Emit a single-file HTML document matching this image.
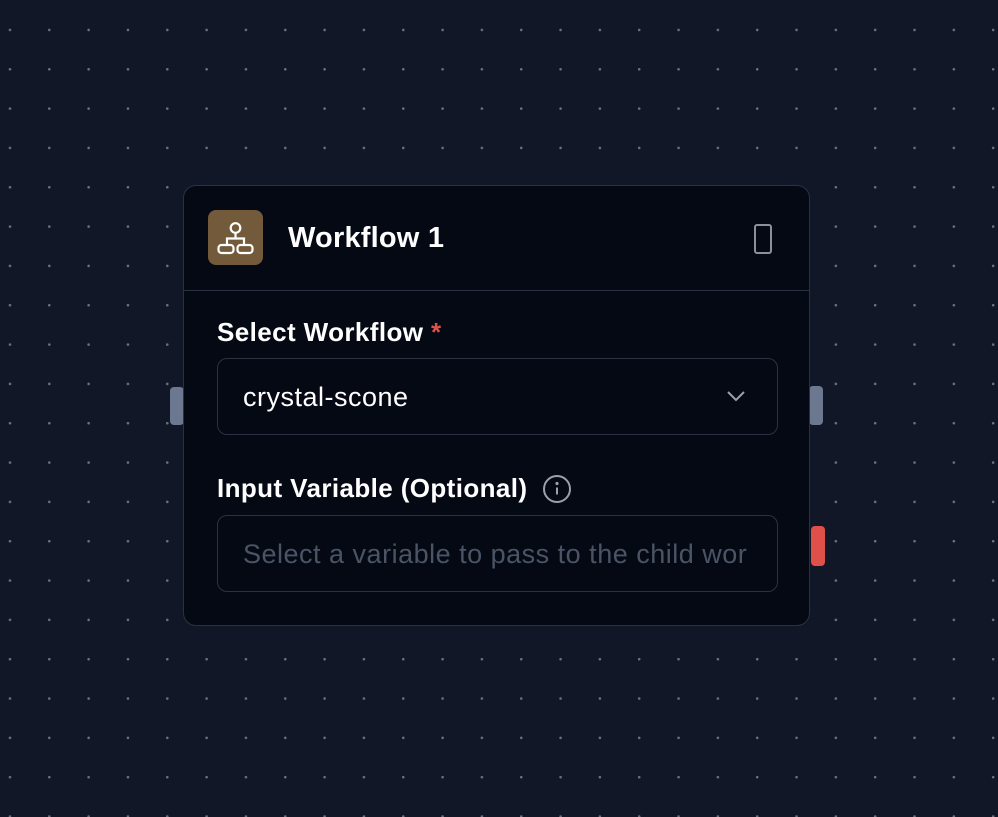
<!DOCTYPE html>
<html><head><style>
html,body{margin:0;padding:0}
body{width:998px;height:817px;overflow:hidden;background-color:#111726;
background-image:radial-gradient(circle,#6a7282 1.1px,transparent 1.5px);
background-size:39.33px 39.33px;background-position:-9.7px 10.3px;
font-family:"Liberation Sans",sans-serif;position:relative}
.card{position:absolute;left:183px;top:185px;width:625px;height:439px;background:#040914;border:1px solid #2a3242;border-radius:13px}
.hdr{position:absolute;left:0;top:0;right:0;height:104px;border-bottom:1px solid #2a3242}
.ic{position:absolute;left:24px;top:24px;width:55px;height:55px;background:#735a3a;border-radius:8px}
.title{position:absolute;left:104px;top:36px;font-size:29px;color:#fff;font-weight:bold;letter-spacing:0.2px}
.lbl{position:absolute;left:33px;font-size:26px;font-weight:bold;color:#fff;letter-spacing:0.4px}
.box{position:absolute;left:33px;width:559px;height:75px;border:1px solid #2a3242;border-radius:10px}
.bt{position:absolute;left:25px;top:23px;font-size:27px;letter-spacing:0.5px}
.h{position:absolute;border-radius:4px}
</style></head><body>
<div class="h" style="left:170px;top:387px;width:14px;height:38px;background:#6b7890"></div>
<div class="h" style="left:809px;top:386px;width:14px;height:39px;background:#6b7890"></div>
<div class="h" style="left:811px;top:526px;width:14px;height:40px;background:#e0504a"></div>
<div class="card">
 <div class="hdr">
  <div class="ic"><svg width="55" height="55" viewBox="0 0 55 55" fill="none" stroke="#fff" stroke-width="2.2"><circle cx="27.5" cy="18" r="4.8"/><path d="M27.5 22.8V28.5M19 35v-6.5h17V35"/><rect x="10.5" y="35" width="15" height="8" rx="3"/><rect x="29.5" y="35" width="15" height="8" rx="3"/></svg></div>
  <div class="title">Workflow 1</div>
  <div style="position:absolute;left:570px;top:38px;width:14px;height:26px;border:2px solid #8a919c;border-radius:3px"></div>
 </div>
 <div class="lbl" style="top:131px">Select Workflow <span style="color:#e0504a">*</span></div>
 <div class="box" style="top:172px"><div class="bt" style="color:#fff">crystal-scone</div>
  <svg style="position:absolute;left:507px;top:30px" width="22" height="14" viewBox="0 0 22 14" fill="none" stroke="#9aa1ab" stroke-width="2"><path d="M3 3l8 8 8-8"/></svg></div>
 <div class="lbl" style="top:287px">Input Variable (Optional)</div>
 <svg style="position:absolute;left:358px;top:288px" width="30" height="30" viewBox="0 0 30 30" fill="none" stroke="#9aa1ab" stroke-width="2"><circle cx="15" cy="15" r="13"/><path d="M15 13.5v7"/><circle cx="15" cy="9.5" r="0.6" fill="#9aa1ab"/></svg>
 <div class="box" style="top:329px;overflow:hidden"><div class="bt" style="color:#4b5465;white-space:nowrap">Select a variable to pass to the child wor</div></div>
</div>
</body></html>
